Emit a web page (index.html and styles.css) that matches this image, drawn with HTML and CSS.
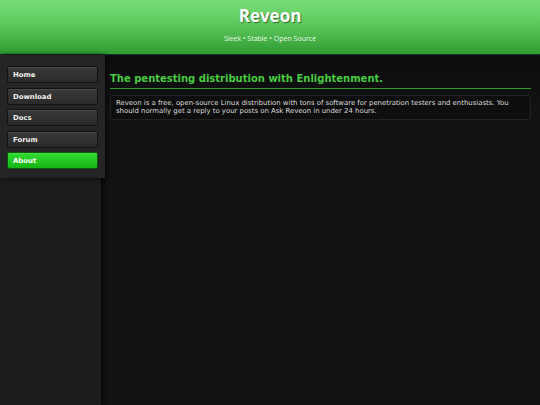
FILE: index.html
```html
<!DOCTYPE html>
<html>
<head>
<meta charset="utf-8">
<link rel="stylesheet" href="styles.css">
</head>
<body>
<header class="top">
  <h1 class="logo">Reveon</h1>
  <p class="tagline">Sleek • Stable • Open Source</p>
</header>
<div class="wrap">
  <aside class="side">
    <nav class="nav">
      <a class="btn" href="#">Home</a>
      <a class="btn" href="#">Download</a>
      <a class="btn" href="#">Docs</a>
      <a class="btn" href="#">Forum</a>
      <a class="btn active" href="#">About</a>
    </nav>
  </aside>
  <main class="main">
    <h2 class="title">The pentesting distribution with Enlightenment.</h2>
    <div class="box">Reveon is a free, open-source Linux distribution with tons of software for penetration testers and enthusiasts. You should normally get a reply to your posts on Ask Reveon in under 24 hours.</div>
  </main>
</div>
</body>
</html>
```
FILE: styles.css
```css
html, body {
  margin: 0;
  padding: 0;
  height: 100%;
}
body {
  background: #111111;
  font-family: "DejaVu Sans", sans-serif;
  color: #dddddd;
  display: flex;
  flex-direction: column;
  -webkit-font-smoothing: antialiased;
}
.top {
  height: 55px;
  flex: none;
  background: linear-gradient(#78de78, #5cc85c 45%, #2f9b32);
  border-bottom: 1px solid #0f3a2a;
  text-align: center;
  box-sizing: border-box;
}
.logo {
  margin: 0;
  padding-top: 4px;
  font-family: "Open Sans", sans-serif;
  font-weight: 700;
  font-size: 17px;
  line-height: 24px;
  color: #ffffff;
  text-shadow: 1px 1px 1px rgba(0,0,0,0.45);
}
.tagline {
  margin: 6px 0 0;
  font-family: "Open Sans", sans-serif;
  font-size: 7px;
  line-height: 10px;
  color: #e8f8e8;
}
.wrap {
  flex: 1;
  display: flex;
}
.side {
  width: 101px;
  background: #1c1c1c;
  flex: none;
  position: relative;
  z-index: 1;
  box-shadow: 2px 0 4px rgba(0,0,0,0.7);
}
.nav {
  width: 105px;
  box-sizing: border-box;
  background: #252525;
  padding: 11px 7px 9px 7px;
  display: flex;
  flex-direction: column;
  gap: 4.5px;
  box-shadow: 1px 1px 4px rgba(0,0,0,0.6);
}
.btn {
  display: block;
  width: 91px;
  height: 17px;
  box-sizing: border-box;
  padding-left: 5px;
  line-height: 16px;
  font-size: 6.9px;
  font-weight: 700;
  color: #f0f0f0;
  text-decoration: none;
  background: linear-gradient(#3a3a3a, #2a2a2a);
  border: 1px solid #121212;
  border-radius: 2px;
  box-shadow: inset 0 1px 0 rgba(255,255,255,0.08);
}
.btn.active {
  background: linear-gradient(#33dd33, #14b414);
  border-color: #0d5a0d;
  color: #ffffff;
}
.main {
  flex: 1;
  padding: 17px 9px 0 9px;
  background: linear-gradient(#0d0d10, #121212 60px);
}
.title {
  margin: 0;
  font-size: 10px;
  line-height: 14px;
  font-weight: 700;
  color: #47cc3f;
  padding-bottom: 2px;
  border-bottom: 1px solid #2e9a2e;
}
.box {
  margin-top: 6px;
  background: #0e0e0e;
  border: 1px solid #222222;
  border-radius: 3px;
  padding: 3px 5px 4px 5px;
  font-size: 6.9px;
  line-height: 8px;
  color: #dcdcdc;
}
```
